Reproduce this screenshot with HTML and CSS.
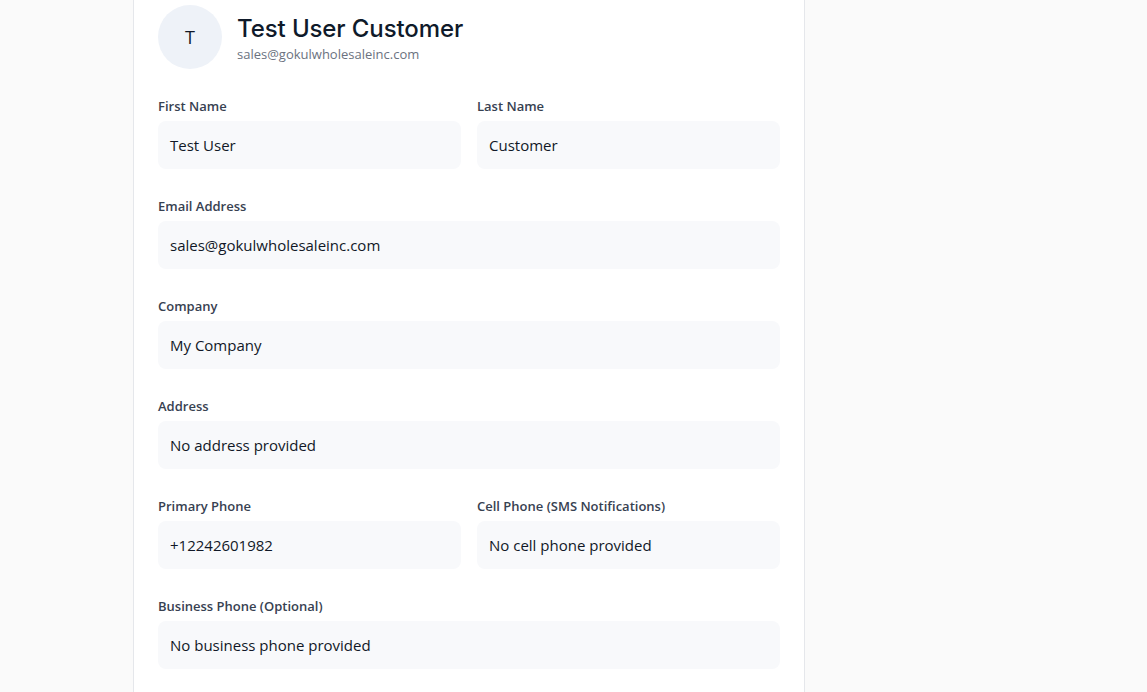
FILE: index.html
```html
<!DOCTYPE html>
<html lang="en">
<head>
<meta charset="utf-8">
<title>Profile</title>
<link rel="stylesheet" href="styles.css">
</head>
<body>
<div class="page">
  <main class="card">
    <header class="profile-head">
      <div class="avatar">T</div>
      <div class="who">
        <h1 class="name">Test User Customer</h1>
        <div class="mail">sales@gokulwholesaleinc.com</div>
      </div>
    </header>

    <div class="row two">
      <div class="field">
        <label class="label">First Name</label>
        <div class="value">Test User</div>
      </div>
      <div class="field">
        <label class="label">Last Name</label>
        <div class="value">Customer</div>
      </div>
    </div>

    <div class="row">
      <div class="field">
        <label class="label">Email Address</label>
        <div class="value">sales@gokulwholesaleinc.com</div>
      </div>
    </div>

    <div class="row">
      <div class="field">
        <label class="label">Company</label>
        <div class="value">My Company</div>
      </div>
    </div>

    <div class="row">
      <div class="field">
        <label class="label">Address</label>
        <div class="value">No address provided</div>
      </div>
    </div>

    <div class="row two">
      <div class="field">
        <label class="label">Primary Phone</label>
        <div class="value">+12242601982</div>
      </div>
      <div class="field">
        <label class="label">Cell Phone (SMS Notifications)</label>
        <div class="value">No cell phone provided</div>
      </div>
    </div>

    <div class="row">
      <div class="field">
        <label class="label">Business Phone (Optional)</label>
        <div class="value">No business phone provided</div>
      </div>
    </div>
  </main>
</div>
</body>
</html>
```

FILE: styles.css
```css
* { box-sizing: border-box; }
html, body {
  margin: 0;
  padding: 0;
  background: #fafafa;
  font-family: "Open Sans", "Noto Sans", "Liberation Sans", sans-serif;
  color: #111827;
  overflow: hidden;
}
.page {
  padding-left: 133px;
  height: 692px;
}
.card {
  width: 672px;
  min-height: 692px;
  background: #ffffff;
  border-left: 1px solid #e5e7eb;
  border-right: 1px solid #e5e7eb;
  padding: 5px 24px 24px 24px;
}
.profile-head {
  display: flex;
  align-items: center;
  gap: 15px;
  margin-bottom: 27px;
}
.avatar {
  width: 64px;
  height: 64px;
  border-radius: 50%;
  background: #eef2f8;
  display: flex;
  align-items: center;
  justify-content: center;
  font-size: 18px;
  color: #111827;
  flex-shrink: 0;
}
.who {
  display: flex;
  flex-direction: column;
  margin-top: 2px;
}
.name {
  margin: 0;
  font-family: "Inter", "Open Sans", sans-serif;
  font-weight: 500;
  font-size: 24px;
  line-height: 30px;
  color: #0f1a2a;
  letter-spacing: -0.1px;
}
.mail {
  font-size: 13px;
  line-height: 18px;
  color: #6b7280;
  margin-top: 1px;
}
.row {
  display: grid;
  grid-template-columns: 1fr;
  gap: 16px;
  margin-bottom: 27px;
}
.row.two {
  grid-template-columns: 1fr 1fr;
}
.field {
  display: flex;
  flex-direction: column;
}
.label {
  font-size: 13px;
  line-height: 20px;
  font-weight: 600;
  color: #374151;
  margin-bottom: 5px;
}
.value {
  height: 48px;
  background: #f8f9fb;
  border-radius: 8px;
  padding: 0 12px;
  display: flex;
  align-items: center;
  font-size: 15px;
  color: #111827;
}
```
